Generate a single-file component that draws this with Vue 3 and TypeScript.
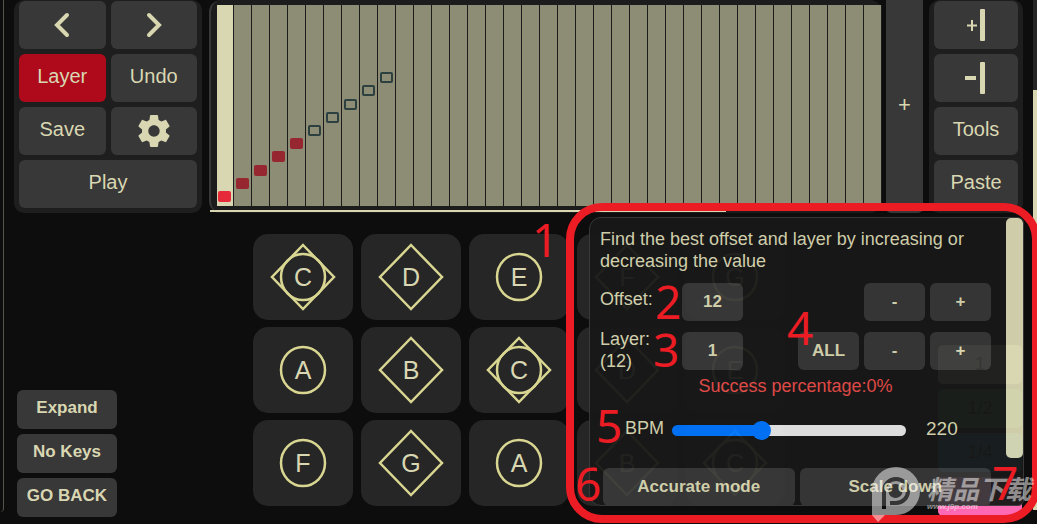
<script setup lang="ts">
import { ref } from 'vue'

type Shape = 'both' | 'diamond' | 'circle'

const keys: { name: string; shape: Shape }[] = [
  { name: 'C', shape: 'both' },
  { name: 'D', shape: 'diamond' },
  { name: 'E', shape: 'circle' },
  { name: 'F', shape: 'diamond' },
  { name: 'G', shape: 'circle' },
  { name: 'A', shape: 'circle' },
  { name: 'B', shape: 'diamond' },
  { name: 'C', shape: 'both' },
  { name: 'D', shape: 'diamond' },
  { name: 'E', shape: 'circle' },
  { name: 'F', shape: 'circle' },
  { name: 'G', shape: 'diamond' },
  { name: 'A', shape: 'circle' },
  { name: 'B', shape: 'diamond' },
  { name: 'C', shape: 'both' },
]

const columns = Array.from({ length: 37 }, (_, i) => ({
  id: i,
  kind: i >= 10 ? '' : i >= 5 ? 'hollow' : 'solid',
  bottom: Math.round(4 + i * 13.2),
}))

const tempos = [
  { label: '1', cls: 'grey' },
  { label: '1/2', cls: 'green' },
  { label: '1/4', cls: 'blue' },
  { label: '', cls: 'pink' },
]

const offset = ref(12)
const layer = ref(1)
const bpm = ref(220)
</script>

<template>
  <main class="app">
    <header class="top">
      <section class="panel controls">
        <button class="btn" aria-label="Previous">
          <svg class="line" width="16" height="26" viewBox="0 0 16 26"><path d="M13 3L3 13L13 23" /></svg>
        </button>
        <button class="btn" aria-label="Next">
          <svg class="line" width="16" height="26" viewBox="0 0 16 26"><path d="M3 3L13 13L3 23" /></svg>
        </button>
        <button class="btn active">Layer</button>
        <button class="btn">Undo</button>
        <button class="btn">Save</button>
        <button class="btn" aria-label="Settings">
          <svg width="40" height="40" viewBox="0 0 24 24">
            <path d="M19.14 12.94c.04-.3.06-.61.06-.94 0-.32-.02-.64-.07-.94l2.03-1.58c.18-.14.23-.41.12-.61l-1.92-3.32c-.12-.22-.37-.29-.59-.22l-2.39.96c-.5-.38-1.03-.7-1.62-.94l-.36-2.54c-.04-.24-.24-.41-.48-.41h-3.84c-.24 0-.43.17-.47.41l-.36 2.54c-.59.24-1.13.57-1.62.94l-2.39-.96c-.22-.08-.47 0-.59.22L2.74 8.87c-.12.21-.08.47.12.61l2.03 1.58c-.05.3-.09.63-.09.94s.02.64.07.94l-2.03 1.58c-.18.14-.23.41-.12.61l1.92 3.32c.12.22.37.29.59.22l2.39-.96c.5.38 1.03.7 1.62.94l.36 2.54c.05.24.24.41.48.41h3.84c.24 0 .44-.17.47-.41l.36-2.54c.59-.24 1.13-.56 1.62-.94l2.39.96c.22.08.47 0 .59-.22l1.92-3.32c.12-.22.07-.47-.12-.61l-2.01-1.58zM12 15.4c-1.880 0-3.400-1.520-3.400-3.400s1.520-3.400 3.400-3.400 3.400 1.520 3.400 3.400-1.520 3.400-3.400 3.400z" />
          </svg>
        </button>
        <button class="btn wide">Play</button>
      </section>

      <section class="roll">
        <div class="grid">
          <div v-for="c in columns" :key="c.id" class="col" :class="{ current: c.id === 0 }">
            <span v-if="c.kind" class="note" :class="c.kind" :style="{ bottom: c.bottom + 'px' }"></span>
          </div>
        </div>
        <div class="progress"></div>
      </section>

      <button class="add">+</button>

      <section class="panel tools">
        <button class="btn" aria-label="Add column">
          <svg width="20" height="32" viewBox="0 0 20 32">
            <path d="M1 15.500H5V11H7V15.500H11V17.500H7V22H5V17.500H1Z" /><rect x="14" y="0" width="5" height="32" rx="1" />
          </svg>
        </button>
        <button class="btn" aria-label="Remove column">
          <svg width="24" height="32" viewBox="0 0 24 32">
            <rect x="1" y="14" width="11" height="4" /><rect x="16" y="0" width="5" height="32" rx="1" />
          </svg>
        </button>
        <button class="btn">Tools</button>
        <button class="btn">Paste</button>
      </section>
    </header>

    <div class="body">
      <nav class="side">
        <button class="small">Expand</button>
        <button class="small">No Keys</button>
        <button class="small">GO BACK</button>
      </nav>
      <section class="keys">
        <button v-for="(k, i) in keys" :key="i" class="key">
          <svg width="68" height="70" viewBox="0 0 68 70">
            <path v-if="k.shape !== 'circle'" d="M34 3L65 35L34 67L3 35Z" />
            <ellipse v-if="k.shape !== 'diamond'" cx="34" cy="35" rx="22" ry="23" />
          </svg>
          <span>{{ k.name }}</span>
        </button>
      </section>
      <nav class="tempos">
        <button v-for="t in tempos" :key="t.cls" class="tempo" :class="t.cls">{{ t.label }}</button>
      </nav>
    </div>

    <section class="dialog">
      <div class="content">
        <p class="intro">Find the best offset and layer by increasing or decreasing the value</p>
        <div class="row">
          <span class="name">Offset:</span>
          <button class="small">{{ offset }}</button>
          <span class="spacer"></span>
          <button class="small" @click="offset--">-</button>
          <button class="small" @click="offset++">+</button>
        </div>
        <div class="row">
          <span class="name">Layer: (12)</span>
          <button class="small">{{ layer }}</button>
          <span class="spacer"></span>
          <button class="small">ALL</button>
          <button class="small" @click="layer--">-</button>
          <button class="small" @click="layer++">+</button>
        </div>
        <p class="success">Success percentage:0%</p>
        <div class="bpm">
          <label for="bpm">BPM</label>
          <input id="bpm" v-model.number="bpm" type="range" min="20" max="556" />
          <output for="bpm">{{ bpm }}</output>
        </div>
        <div class="modes">
          <button class="small">Accurate mode</button>
          <button class="small">Scale down</button>
        </div>
      </div>
      <div class="scrollbar"><div class="thumb"></div></div>
    </section>

    <div class="edge left"></div>
    <div class="edge right"></div>

    <div class="frame"></div>
    <span class="mark m1">1</span>
    <span class="mark m2">2</span>
    <span class="mark m3">3</span>
    <span class="mark m4">4</span>
    <span class="mark m5">5</span>
    <span class="mark m6">6</span>
    <div class="watermark">
      <svg width="54" height="56" viewBox="0 0 54 56">
        <path fill-rule="evenodd" d="M1 24A24 24 0 0 1 25 0A24 24 0 0 1 49 24A24 24 0 0 1 25 48L14 48L7 55L1 48ZM11 42V24A14 14 0 0 1 25 10A14 14 0 0 1 25 38H19V34H25A10 10 0 1 0 15 24V42ZM25 17A7 7 0 1 1 24 17Z" />
      </svg>
      <div class="brand"><b>精品下载</b><i>www.j9p.com</i></div>
    </div>
    <span class="mark m7">7</span>
  </main>
</template>

<style>
body {
  background: #0d0d0d;
}
</style>

<style scoped>
.app {
  position: relative;
  min-height: 100vh;
  max-height: 100vh;
  overflow: hidden;
  background: #0d0d0d;
  color: #d9d7b2;
  font-family: "Liberation Sans", Arial, sans-serif;
}
* {
  box-sizing: border-box;
}
p {
  margin: 0;
}
button {
  font-family: inherit;
  color: inherit;
  border: 0;
  padding: 0;
  cursor: pointer;
}
.top {
  display: flex;
  padding: 0 14px;
}
.panel {
  display: grid;
  grid-auto-rows: 48px;
  gap: 5px;
  padding: 1px 5px 5px;
  background: #1e1e1e;
  border-radius: 10px;
}
.controls {
  width: 188px;
  grid-template-columns: 1fr 1fr;
  margin-right: 7px;
}
.tools {
  width: 94px;
  margin-left: 6px;
}
.btn {
  display: flex;
  align-items: center;
  justify-content: center;
  background: #383838;
  border-radius: 6px;
  font-size: 20px;
  padding-bottom: 3px;
}
.btn:has(svg) {
  padding-bottom: 0;
}
.btn svg {
  fill: #d9d7b2;
}
.btn svg.line {
  fill: none;
  stroke: #d9d7b2;
  stroke-width: 4;
  stroke-linecap: round;
}
.active {
  background: #ae0a1b;
}
.wide {
  grid-column: 1 / -1;
}
.roll {
  flex: 1;
  border: 1px solid #383838;
  border-width: 0 0 0 2px;
  border-radius: 12px;
  background: #1c1c1c;
  padding: 5px 0 0 6px;
  display: flex;
  flex-direction: column;
}
.grid {
  flex: 1;
  display: grid;
  grid-template-columns: 17px repeat(36, 1fr);
}
.col {
  position: relative;
  background: #8d8d76;
  border-right: 1px solid #1c1c1c;
}
.current {
  background: #d9d7b2;
}
.note {
  position: absolute;
  left: 2px;
  width: 13px;
  height: 11px;
  border-radius: 2px;
}
.solid {
  background: #96262f;
}
.current .note {
  left: 1px;
  background: #e62a3a;
}
.hollow {
  border: 2px solid #2c4040;
}
.progress {
  width: 516px;
  height: 2px;
  margin: 4px 0 1px -7px;
  background: #d9d7b2;
}
.add {
  width: 37px;
  margin-left: 4px;
  padding-bottom: 4px;
  background: #383838;
  border-radius: 0 0 5px 5px;
  font-size: 22px;
}
.body {
  display: flex;
  justify-content: space-between;
  padding: 21px 15px 0 17px;
}
.side {
  width: 100px;
  padding-top: 156px;
  display: grid;
  align-content: start;
  grid-auto-rows: 39px;
  gap: 5px;
}
.small {
  background: #383838;
  border-radius: 6px;
  font-size: 17px;
  font-weight: bold;
  padding-bottom: 1px;
}
.side .small {
  padding-bottom: 3px;
}
.keys {
  display: grid;
  grid-template-columns: repeat(5, 100px);
  grid-auto-rows: 86px;
  gap: 7px 8px;
  margin-left: 136px;
}
.key {
  display: grid;
  place-items: center;
  background: #262626;
  border-radius: 15px;
  font-size: 25px;
}
.key > * {
  grid-area: 1 / 1;
}
.key svg {
  fill: none;
  stroke: #d9d692;
  stroke-width: 2.5;
}
.tempos {
  flex: none;
  width: 84px;
  margin-left: auto;
  padding-top: 111px;
  display: grid;
  align-content: start;
  grid-auto-rows: 39px;
  gap: 5px;
}
.tempo {
  border-radius: 5px;
  font-size: 18px;
  color: #111;
}
.grey {
  background: #d9d7b2;
}
.green {
  background: #3c9a4a;
}
.blue {
  background: #2a8fb8;
}
.pink {
  background: #ff69b4;
}
.dialog {
  position: absolute;
  top: 217px;
  right: 13px;
  width: 435px;
  height: 289px;
  display: flex;
  overflow: hidden;
  background: #181818;
  border: 1px solid #3a3a3a;
  border-radius: 12px 6px 6px 12px;
  opacity: 0.95;
}
.content {
  flex: 1;
  padding: 10px 15px 0 10px;
  font-size: 18px;
  line-height: 22px;
}
.row {
  display: flex;
  gap: 5px;
  height: 38px;
  margin-top: 11px;
}
.name {
  width: 77px;
  height: 44px;
  margin-top: -4px;
  padding-right: 20px;
}
.row:first-of-type .name {
  padding-top: 9px;
}
.row .small {
  width: 61px;
}
.spacer {
  flex: 1;
}
.success {
  margin-top: 5px;
  text-align: center;
  color: #e84c49;
}
.bpm {
  display: flex;
  align-items: center;
  height: 24px;
  margin-top: 19px;
  padding-left: 25px;
}
.bpm input {
  appearance: none;
  width: 234px;
  height: 11px;
  margin: 4px 20px 0 8px;
  border-radius: 6px;
  background: linear-gradient(90deg, #0075ff 38%, #e9e9e9 38%);
}
.bpm input::-webkit-slider-thumb {
  appearance: none;
  width: 19px;
  height: 19px;
  border-radius: 50%;
  background: #0075ff;
}
.bpm output {
  font-size: 19px;
  padding-top: 2px;
}
.modes {
  display: grid;
  grid-template-columns: 1fr 1fr;
  gap: 5px;
  height: 38px;
  margin-top: 28px;
  padding-left: 3px;
}
.scrollbar {
  width: 17px;
}
.thumb {
  height: 240px;
  background: #d9d7b2;
  border-radius: 5px;
}
.edge {
  position: absolute;
}
.left {
  left: 0;
  top: 0;
  width: 4px;
  height: 512px;
  background: #0d0d0d;
  border: 1px solid #555550;
  border-width: 0 1px 0 0;
  border-bottom-right-radius: 4px;
}
.right {
  right: 0;
  top: 0;
  width: 4px;
  height: 510px;
  background: linear-gradient(#262626 90px, #d9d7b2 90px);
}
.frame {
  position: absolute;
  top: 203px;
  right: -3px;
  bottom: 1px;
  width: 474px;
  border: 8px solid #ec1c24;
  border-radius: 36px;
}
.mark {
  position: absolute;
  color: #ec1c24;
  font: 46px/46px "Noto Sans", sans-serif;
}
.m1 { left: 532px; top: 216px; }
.m2 { left: 655px; top: 278px; }
.m3 { left: 653px; top: 326px; }
.m4 { left: 787px; top: 304px; }
.m5 { left: 596px; top: 402px; }
.m6 { left: 575px; top: 460px; }
.m7 { left: 992px; top: 459px; }
.watermark {
  position: absolute;
  right: 6px;
  bottom: 1px;
  display: flex;
  color: #fff;
  opacity: 0.5;
}
.watermark svg {
  fill: #fff;
}
.brand {
  display: flex;
  flex-direction: column;
  padding-top: 7px;
  margin-left: 2px;
}
.brand b {
  font: italic bold 26px/28px "Noto Sans CJK SC", sans-serif;
}
.brand i {
  font: italic bold 8px/10px "Liberation Sans", sans-serif;
}
</style>
